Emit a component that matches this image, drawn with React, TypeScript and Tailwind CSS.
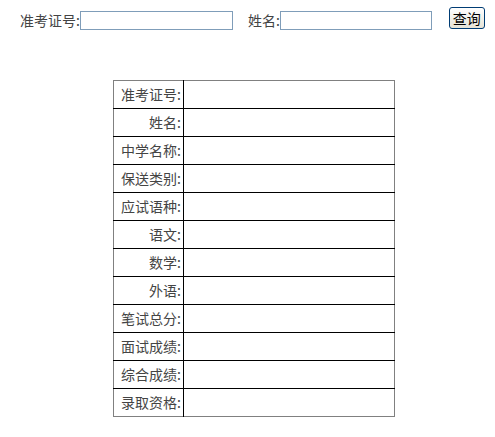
import React from 'react';

const fields = ['准考证号', '姓名', '中学名称', '保送类别', '应试语种', '语文', '数学', '外语', '笔试总分', '面试成绩', '综合成绩', '录取资格'];

const font = { fontFamily: '"Noto Sans CJK SC", "Noto Sans", sans-serif' };

export default function App() {
  return (
    <div className="w-[495px] h-[437px] bg-white text-[14px] text-[#444]" style={font}>
      {/* search bar */}
      <div className="flex items-start pt-[7px] pl-[20px]">
        <div className="flex items-center mt-[4px]">
          <span className="leading-[19px]">准考证号:</span>
          <input className="w-[153px] h-[19px] border border-[#7f9db9] bg-white outline-none" />
        </div>
        <div className="flex items-center mt-[4px] ml-[15px]">
          <span className="leading-[19px]">姓名:</span>
          <input className="w-[152px] h-[19px] border border-[#7f9db9] bg-white outline-none" />
        </div>
        <button className="ml-[17px] w-[36px] h-[22px] rounded-[3px] border border-[#003c74] bg-gradient-to-b from-white to-[#e6e3d6] text-black text-[14px] leading-[18px]">
          查询
        </button>
      </div>

      {/* result table */}
      <table className="ml-[113px] mt-[50px] w-[282px] border-collapse border border-[#808080]">
        <tbody>
          {fields.map((f, i) => (
            <tr key={f}>
              <td className={`w-[70px] h-[28px] p-0 pr-[2px] text-right border-r border-black ${i > 0 ? 'border-t' : ''}`}>
                {f}:
              </td>
              <td className={`h-[28px] p-0 ${i > 0 ? 'border-t border-black' : ''}`}></td>
            </tr>
          ))}
        </tbody>
      </table>
    </div>
  );
}
